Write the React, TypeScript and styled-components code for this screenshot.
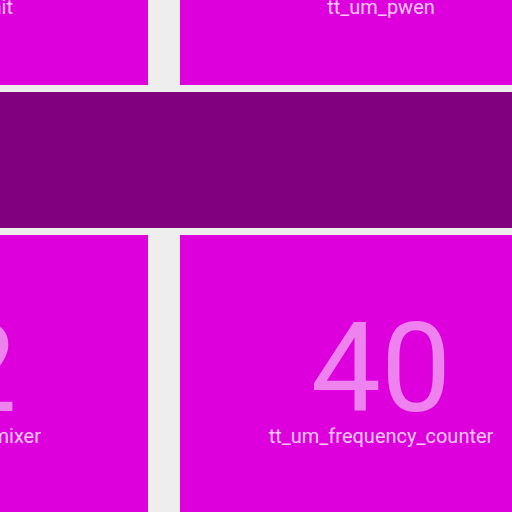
import styled, { createGlobalStyle } from "styled-components";

const GlobalStyle = createGlobalStyle`
  body {
    margin: 0;
    background: #eeeeee;
    font-family: Roboto, "Liberation Sans", sans-serif;
  }
`;

const Viewport = styled.main`
  display: flex;
  flex-direction: column;
  gap: 7px;
  height: 100vh;
  overflow: hidden;
`;

const TileRow = styled.section<{ $grow?: boolean }>`
  display: grid;
  grid-template-columns: 148px minmax(402px, 1fr);
  column-gap: 32px;
  flex: ${(p) => (p.$grow ? "1 0 auto" : "none")};
`;

const Tile = styled.article<{ $cut?: boolean; $tall?: boolean }>`
  display: flex;
  flex-direction: column;
  align-items: ${(p) => (p.$cut ? "flex-end" : "center")};
  box-sizing: border-box;
  overflow: hidden;
  padding-top: ${(p) => (p.$tall ? "80px" : "0")};
  padding-bottom: ${(p) => (p.$tall ? "64px" : "71px")};
  background: #dd00dd;
  white-space: nowrap;
`;

const Address = styled.div<{ $inset?: number }>`
  margin-right: ${(p) => p.$inset ?? 0}px;
  font-size: 125px;
  line-height: 108px;
  color: #ee82ee;
`;

const Label = styled.div<{ $inset?: number }>`
  margin-right: ${(p) => p.$inset ?? 0}px;
  font-size: 20px;
  line-height: 26px;
  color: #fcc8fc;
`;

const TopLabel = styled(Label)`
  line-height: 14px;
`;

const Spine = styled.div`
  flex: none;
  height: 136px;
  background: #800080;
`;

export default function App() {
  return (
    <>
      <GlobalStyle />
      <Viewport>
        <TileRow>
          <Tile $cut>
            <TopLabel $inset={135}>nit</TopLabel>
          </Tile>
          <Tile>
            <TopLabel>tt_um_pwen</TopLabel>
          </Tile>
        </TileRow>
        <Spine />
        <TileRow $grow>
          <Tile $cut $tall>
            <Address $inset={131}>2</Address>
            <Label $inset={107}>mixer</Label>
          </Tile>
          <Tile $tall>
            <Address>40</Address>
            <Label>tt_um_frequency_counter</Label>
          </Tile>
        </TileRow>
      </Viewport>
    </>
  );
}
